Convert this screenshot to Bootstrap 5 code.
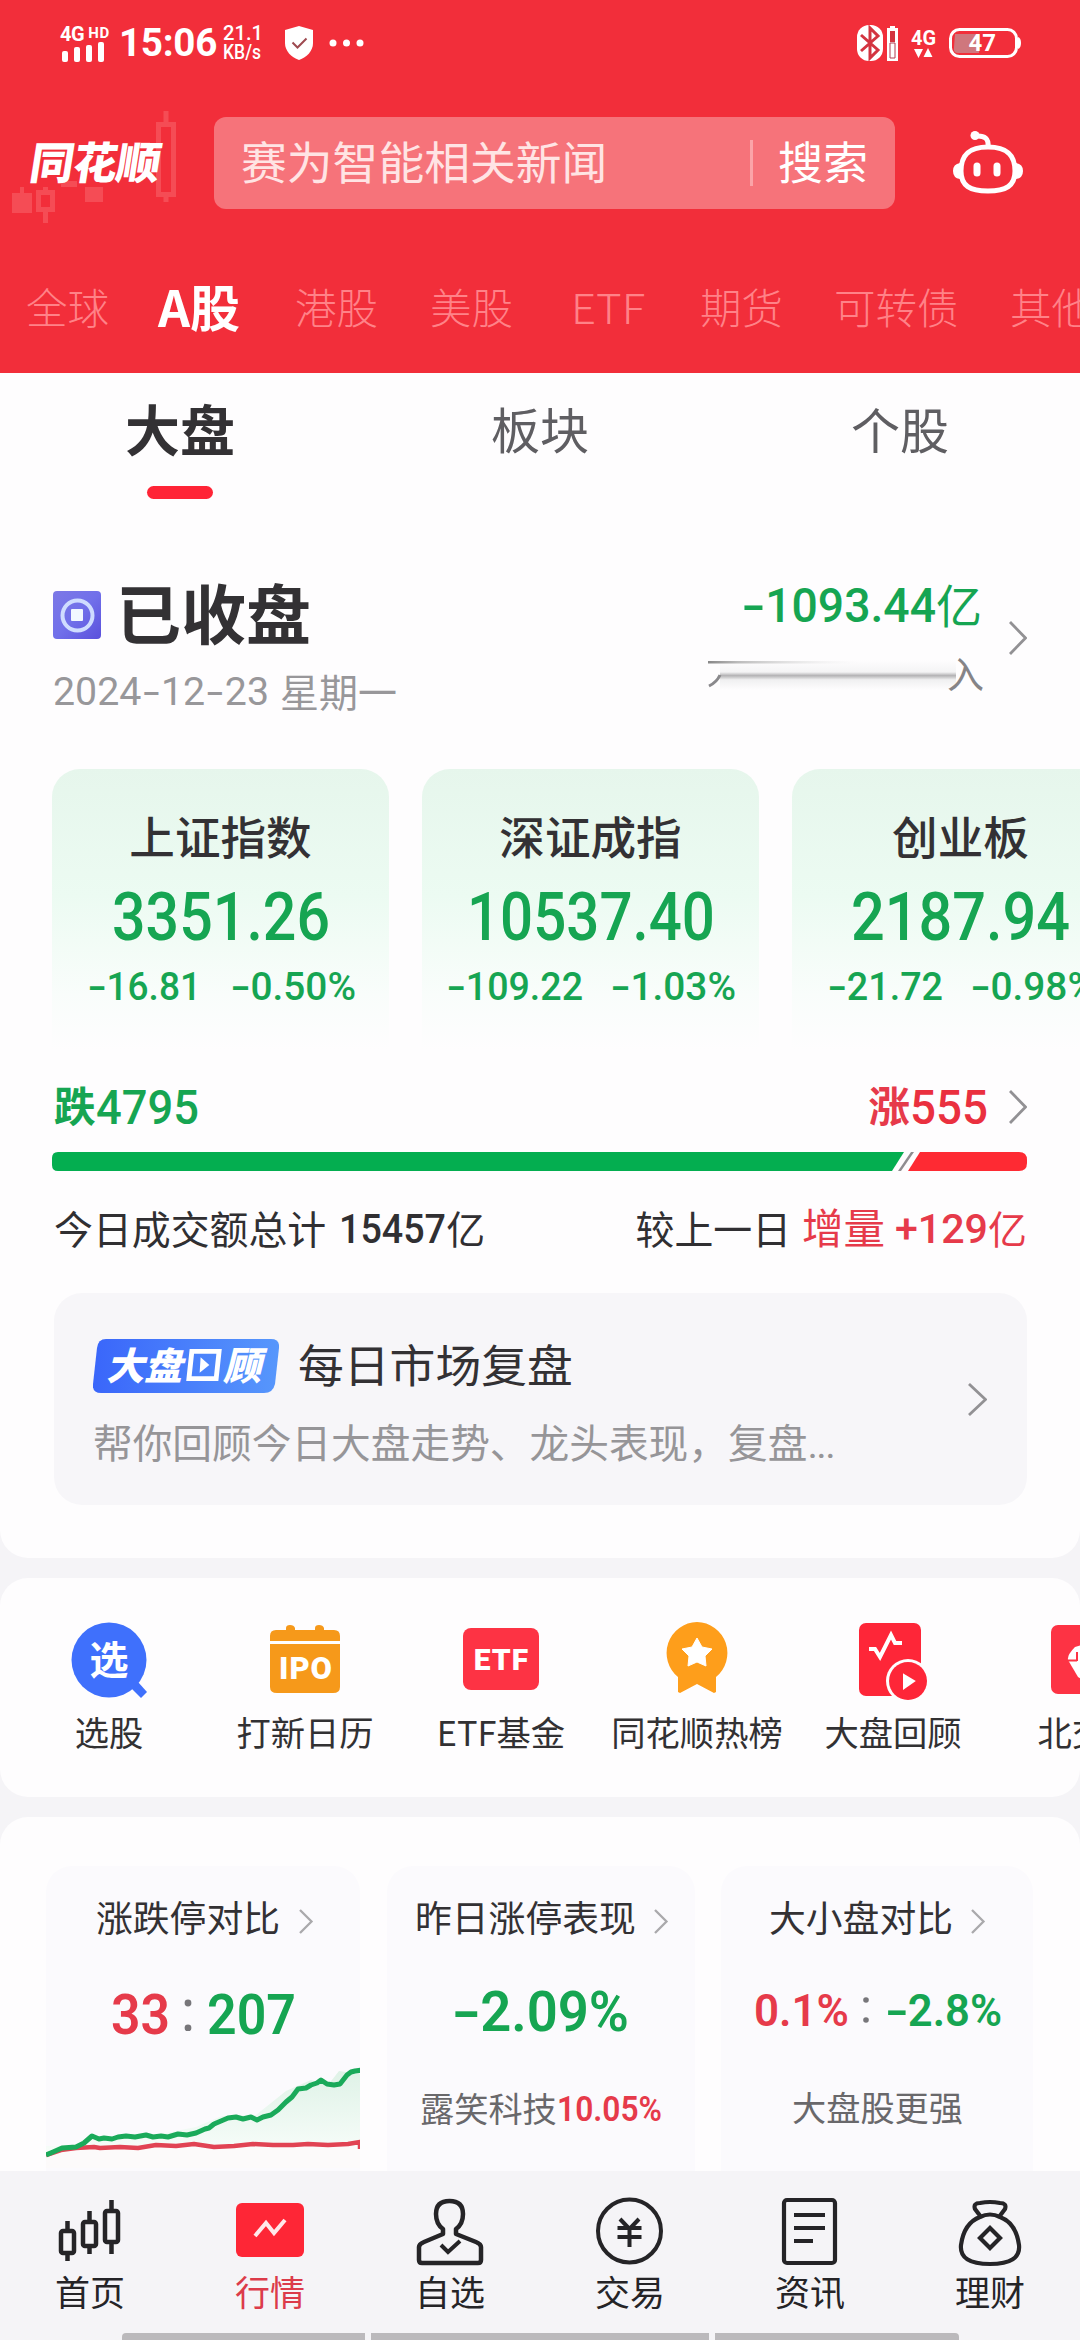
<!DOCTYPE html>
<html lang="zh-CN">
<head>
<meta charset="utf-8">
<meta name="viewport" content="width=device-width, initial-scale=1">
<title>同花顺 行情</title>
<link rel="stylesheet" href="https://cdn.jsdelivr.net/npm/bootstrap@5.3.0/dist/css/bootstrap.min.css">
<style>
:root{--up:#e63a4a;--dn:#16a552;--ink:#333134;--brand:#f22e3a}
html,body{width:1080px;height:2340px;overflow:hidden}
body{font-family:"Noto Sans CJK SC","Noto Sans",sans-serif;background:#f5f4f7;color:var(--ink);line-height:1;display:flex;flex-direction:column}
svg{display:block;flex:none}
.num{font-family:Roboto,"Noto Sans",sans-serif;font-weight:500;display:inline-block;white-space:nowrap;transform-origin:0 50%}
.neg{display:inline-block;width:.5em;transform:scaleX(1.5);text-align:center}
.up{color:var(--up)}.down{color:var(--dn)}
.line{white-space:nowrap;display:flex;align-items:center}
.cj{position:relative;top:-.05em}
.head{background:var(--brand);height:373px;color:#fff;flex:none}
.status{height:86px;padding:0 60px;font-family:Roboto,sans-serif;font-weight:700}
.clock{font-size:38.5px;letter-spacing:-.3px}
.tiny{font-size:20.5px;line-height:19px}
.searchrow{height:92px;margin-top:31px}
.brandbox{width:214px;height:130px;margin-top:-2px}
.brandname{left:31px;top:41px;font-size:44px;font-weight:900;letter-spacing:-.8px;transform:skewX(-9deg);}
.searchbox{width:681px;height:92px;border-radius:12px;background:#f6737a;font-size:45.8px;color:#ffe4e4;padding-left:27px}
.searchbtn{color:#fff}
.vline{width:3px;height:46px;background:#fba4a8}
.markets{height:164px;padding:32px 0 0 26px;font-size:41.5px;color:#ff8288;font-weight:300}
.markets>span{flex:none}
.markets .cur{font-size:50px;font-weight:700;color:#fff}
.sheet{background:#fefdfe;flex:none}
.tabs3{height:139px}
.tabs3>div{width:360px;font-size:49px;color:#5f5e62;height:109px;display:flex;align-items:center;justify-content:center}
.tabs3 .cur{font-size:55px;font-weight:700;color:var(--ink)}
.barline{width:66px;height:13px;border-radius:7px;background:#ff2436;left:147px;top:113px}
.idx{width:337px;height:281px;border-radius:28px 28px 0 0;background:linear-gradient(#e6f6ec,#ecfbf2 45%,#f9fdfb 80%,#fefdfe);flex:none}
.idxname{font-size:45.6px;font-weight:500;height:54px;margin-top:42px}
.review{margin:0 53px 0 54px;width:973px;height:212px;border-radius:28px;background:#f7f6f9}
.tag{width:186px;height:54px;position:relative;color:#fff;font-size:38px;font-weight:900;font-style:italic}
.tool{width:196px;flex:none;font-size:34.3px;height:219px;color:#323133}
.toolicon{height:76px;margin-top:44px}
.mini{height:305px;border-radius:26px 26px 0 0;background:#fbfafd;font-size:36.8px;overflow:hidden}
.sub2{font-size:34.2px;color:#69686b}
.bottom{height:169px;background:#f5f4f7;font-size:35px;color:#252427;flex:none;position:relative}
.bottom .it{width:180px;padding-top:26px}
.pill{height:7px;background:#bbb9bc;bottom:0}
</style>
<script src="https://cdn.jsdelivr.net/npm/bootstrap@5.3.0/dist/js/bootstrap.bundle.min.js"></script>
</head>
<body>
<header class="head">
  <div class="status d-flex align-items-center">
    <div style="width:60px">
      <div style="font-size:20px;line-height:16px;letter-spacing:-.5px">4G<span style="font-size:15px;vertical-align:3px;letter-spacing:.5px"> HD</span></div>
      <svg width="46" height="20" viewBox="0 0 46 20" fill="#fff"><rect x="2" y="9" width="6" height="11" rx="2"/><rect x="14" y="5" width="6" height="15" rx="2"/><rect x="26" y="3" width="6" height="17" rx="2"/><rect x="38" y="0" width="6" height="20" rx="2"/></svg>
    </div>
    <span class="num clock" style="font-weight:700" data-w="98">15:06</span>
    <div class="tiny" style="margin-left:6px;width:57px"><span class="num" data-w="40">21.1</span><br><span class="num" data-w="38">KB/s</span></div>
    <svg style="margin-left:4px" width="30" height="34" viewBox="0 0 30 34"><path d="M15 0 29 4V17C29 25 23 31 15 34 7 31 1 25 1 17V4Z" fill="#fff"/><path d="m8.500 16.500 5 5 9-9" fill="none" stroke="#9e4a50" stroke-width="2"/></svg>
    <svg style="margin-left:15px" width="36" height="8" viewBox="0 0 36 8" fill="#fff"><circle cx="4" cy="4" r="3.500"/><circle cx="17.500" cy="4" r="3.500"/><circle cx="31" cy="4" r="3.500"/></svg>
    <svg style="margin-left:491px" width="43" height="36" viewBox="0 0 43 36"><rect x="1" y="0" width="26" height="36" rx="12" fill="#fff"/><path d="m5 10 17 15-8 8V3l8 8L5 26" fill="none" stroke="#d33440" stroke-width="3"/><path d="M34 1h5v3h-5zM31 3h11v33H31z" fill="#fff"/><path d="M34 6h5v11h-5z" fill="#d33440"/><path d="M34 18h5v15h-5z" fill="none" stroke="#b33a50" stroke-width="1"/></svg>
    <div style="margin-left:12px;width:25px"><span class="num" style="font-size:20px;font-weight:700;line-height:19px" data-w="25">4G</span>
      <svg style="margin-left:3px" width="19" height="10" viewBox="0 0 19 10" fill="#fff"><path d="M0 1h9L4.500 10zM9.500 9h9L14 0z"/></svg></div>
    <div class="position-relative d-flex align-items-center justify-content-center" style="margin-left:13px;width:72px;height:30px;font-size:24px">
      <svg class="position-absolute start-0 top-0" width="72" height="30" viewBox="0 0 72 30"><path d="M6 6h24v19H9q-5 0-4-6z" fill="#cf777d"/><rect x="1.500" y="1.500" width="66" height="27" rx="9" fill="none" stroke="#fff" stroke-width="3"/><path d="M69 9q3 1 3 6t-3 6z" fill="#fff"/></svg>
      <span class="position-relative" style="left:-2px">47</span>
    </div>
  </div>
  <div class="searchrow d-flex align-items-center">
    <div class="brandbox position-relative">
      <svg width="190" height="130" viewBox="0 0 190 130" fill="none" stroke="#f54c55" stroke-width="5"><path d="M12 96h20v20H12zM20 90h4v6h-4zM85 90h18v15H85zM61 84h16v6H61zM134 45h16v6h-16z" fill="#f54c55" stroke="none"/><path d="M38.500 95.500h14v17h-14zM45.500 90v5M45.500 113v13M158.500 27.500h15v70h-15zM166 14v13M166 98v7"/></svg>
      <span class="brandname position-absolute">同花顺</span>
    </div>
    <div class="searchbox line"><span class="cj" style="width:509px">赛为智能相关新闻</span><i class="vline"></i><span class="searchbtn cj" style="margin-left:25px;font-size:45px">搜索</span></div>
    <svg style="margin-left:57px" width="72" height="66" viewBox="0 0 72 66" fill="none" stroke="#fff" stroke-width="5"><path d="M36 17C57 17 63 27 63 41 63 56 54 61 36 61S9 56 9 41C9 27 15 17 36 17Z"/><path d="M36 17C37 8 32 6 26 6"/><path d="M8 33Q1 34 1 41T8 49ZM64 33Q71 34 71 41T64 49Z" fill="#fff" stroke="none"/><circle cx="23" cy="5.500" r="4.500" fill="#fff" stroke="none"/><path d="M25 36v7M45 36v7" stroke-width="7" stroke-linecap="round"/></svg>
  </div>
  <nav class="markets d-flex align-items-center text-nowrap overflow-hidden">
    <span style="width:132px">全球</span><span class="cur cj" style="width:137px">A股</span><span style="width:135px">港股</span><span style="width:141px">美股</span><span style="width:129px"><span class="num" style="font-weight:300;font-family:'Noto Sans CJK SC',sans-serif" data-w="74">ETF</span></span><span style="width:134px">期货</span><span style="width:176px">可转债</span><span>其他</span>
  </nav>
</header>

<main class="sheet" style="height:1185px;border-radius:0 0 28px 28px">
  <div class="tabs3 d-flex position-relative"><div class="cur">大盘</div><div>板块</div><div>个股</div><span class="barline position-absolute"></span></div>

  <section class="d-flex justify-content-between" style="height:257px;padding:60px 53px 0 53px">
    <div>
      <div class="line" style="height:86px">
        <svg width="48" height="48" viewBox="0 0 48 48"><defs><linearGradient id="g1" x1="0" y1="0" x2="1" y2="1"><stop offset="0" stop-color="#7c78e6"/><stop offset=".5" stop-color="#7170ea"/><stop offset="1" stop-color="#5a50dc"/></linearGradient></defs><rect width="48" height="48" rx="4" fill="url(#g1)"/><circle cx="24.500" cy="24.500" r="15" fill="none" stroke="#cfdcff" stroke-width="4"/><rect x="18" y="18" width="12" height="12" rx="1" fill="#f1f8ff"/></svg>
        <span class="cj fw-bold" style="font-size:65px;margin-left:15px">已收盘</span>
      </div>
      <div class="line" style="height:68px;font-size:39px;color:#98979a"><span class="num" style="font-weight:400;margin-left:0" data-w="216">2024-12-23</span><span style="margin-left:11px" class="cj">星期一</span></div>
    </div>
    <div class="d-flex align-items-center" style="height:128px;margin-top:2px">
      <div style="width:276px">
        <div class="line justify-content-end down" style="height:62px"><span class="num" style="font-size:49px" data-w="194">-1093.44</span><span class="cj" style="font-size:46px">亿</span></div>
        <div class="position-relative d-flex justify-content-end" style="height:66px;font-size:37px;color:#858487">
          <svg class="position-absolute" style="left:2px;top:12px" width="252" height="44" viewBox="0 0 252 44"><defs><linearGradient id="g2"><stop offset="0" stop-color="#888"/><stop offset=".2" stop-color="#bbb"/><stop offset="1" stop-color="#eee" stop-opacity="0"/></linearGradient><linearGradient id="g3" x1="0" y1="0" x2="0" y2="1"><stop offset="0" stop-color="#fefdfe"/><stop offset=".4" stop-color="#f4f4f5"/><stop offset=".52" stop-color="#b4b3b5"/><stop offset=".66" stop-color="#f0f0f1"/><stop offset="1" stop-color="#fefdfe"/></linearGradient></defs><path d="M12 12H248V42H12Z" fill="url(#g3)"/><path d="M0 13h150v2.500H0z" fill="url(#g2)"/><path d="M1 38Q9 34 12 27" fill="none" stroke="#8a898c" stroke-width="3"/></svg>
          <span class="position-relative" style="top:19px;left:2px">入</span>
        </div>
      </div>
      <svg style="margin-left:27px" width="18" height="34" viewBox="0 0 18 34" fill="none" stroke="#929194" stroke-width="2.800"><path d="m1 1 15.500 16L1 33"/></svg>
    </div>
  </section>

  <section class="d-flex overflow-hidden" style="padding-left:52px;gap:33px">
    <div class="idx">
      <div class="idxname line justify-content-center"><span class="cj">上证指数</span></div>
      <div class="line justify-content-center down" style="height:104px;font-size:67px"><span class="num" data-w="218">3351.26</span></div>
      <div class="line down" style="height:36px;font-size:39px;padding-left:36px"><span class="num" data-w="113">-16.81</span><span class="num" style="margin-left:30px" data-w="125">-0.50%</span></div>
    </div>
    <div class="idx">
      <div class="idxname line justify-content-center"><span class="cj">深证成指</span></div>
      <div class="line justify-content-center down" style="height:104px;font-size:67px"><span class="num" data-w="248">10537.40</span></div>
      <div class="line down" style="height:36px;font-size:39px;padding-left:25px"><span class="num" data-w="136">-109.22</span><span class="num" style="margin-left:28px" data-w="125">-1.03%</span></div>
    </div>
    <div class="idx">
      <div class="idxname line justify-content-center"><span class="cj">创业板</span></div>
      <div class="line justify-content-center down" style="height:104px;font-size:67px"><span class="num" data-w="219">2187.94</span></div>
      <div class="line down" style="height:36px;font-size:39px;padding-left:36px"><span class="num" data-w="115">-21.72</span><span class="num" style="margin-left:28px" data-w="125">-0.98%</span></div>
    </div>
  </section>

  <section style="padding:25px 53px 0 52px">
    <div class="line justify-content-between" style="height:64px;font-size:41.500px">
      <span class="line down"><span class="cj" style="font-weight:700;margin-left:2px">跌</span><span class="num" style="font-size:49px;font-weight:500" data-w="103">4795</span></span>
      <span class="line up"><span class="cj" style="font-weight:700">涨</span><span class="num" style="font-size:49px;font-weight:500;color:#ea303f" data-w="78">555</span><svg style="margin-left:21px" width="18" height="34" viewBox="0 0 18 34" fill="none" stroke="#929194" stroke-width="2.800"><path d="m1 1 15.500 16L1 33"/></svg></span>
    </div>
    <svg style="margin-top:13px" width="975" height="19" viewBox="0 0 975 19"><path d="M6 0H852L840 19H6Q0 19 0 13V6Q0 0 6 0Z" fill="#04ae50"/><path d="M846 19h3L862 0h-3z" fill="#8f8d90"/><path d="M868 0H967Q975 0 975 8V11Q975 19 967 19H856Z" fill="#fe2a33"/></svg>
    <div class="line justify-content-between" style="height:116px;font-size:38.900px;color:#302f32">
      <span class="line"><span class="cj" style="margin-left:2px">今日成交额总计</span><span class="num" style="font-size:41px;margin-left:13px" data-w="107">15457</span><span class="cj">亿</span></span>
      <span class="line"><span class="cj">较上一日</span><span class="cj up" style="font-size:41.500px;margin-left:11px">增量</span><span class="num up" style="font-size:41px;margin-left:10px" data-w="93">+129</span><span class="cj up">亿</span></span>
    </div>
  </section>

  <section class="review d-flex align-items-center position-relative" style="margin-top:6px">
    <div style="padding-left:39px;padding-top:26px;width:914px">
      <div class="line" style="height:54px">
        <div class="tag line">
          <svg class="position-absolute start-0 top-0" width="186" height="54" viewBox="0 0 186 54"><defs><linearGradient id="g4"><stop offset="0" stop-color="#3a66fa"/><stop offset="1" stop-color="#5797fc"/></linearGradient></defs><path d="M13 0H178Q187 0 186 9L182 45Q180 54 171 54H8Q-1 54 0 45L4 9Q5 0 13 0Z" fill="url(#g4)"/></svg>
          <span class="position-relative cj" style="left:13px">大盘<svg class="d-inline-block" style="margin:0 1px 0 4px;vertical-align:-2px" width="36" height="33" viewBox="0 0 37 33"><path d="M6 2H34L31 30H3Z" fill="none" stroke="#fff" stroke-width="5"/><path d="m15 8 9 8-10 8z" fill="#fff"/></svg>顾</span>
        </div>
        <span class="cj" style="font-size:45.800px;margin-left:19px">每日市场复盘</span>
      </div>
      <div class="line" style="height:80px;margin-top:12px;font-size:39.700px;color:#969598"><span class="cj">帮你回顾今日大盘走势、龙头表现，复盘<span style="font-family:Roboto,sans-serif;letter-spacing:-1.5px">...</span></span></div>
    </div>
    <svg width="19" height="33" viewBox="0 0 19 33" fill="none" stroke="#929194" stroke-width="2.800"><path d="m1 1 16.500 15.500L1 32"/></svg>
  </section>
</main>

<section class="sheet d-flex overflow-hidden" style="height:219px;margin-top:20px;border-radius:28px;padding-left:11px">
  <div class="tool text-center"><div class="toolicon d-flex justify-content-center"><svg width="76" height="76" viewBox="0 0 76 76"><path d="m60 66 7-6 9 10-6 6z" fill="#3f70fc"/><circle cx="38" cy="38" r="37.500" fill="#3f70fc"/><text x="38" y="52" text-anchor="middle" font-size="39" font-weight="700" fill="#fff">选</text></svg></div><div style="margin-top:16px">选股</div></div>
  <div class="tool text-center"><div class="toolicon d-flex justify-content-center"><svg width="72" height="76" viewBox="0 0 72 76"><path d="M7 8H17V6Q17 3 21 3T26 6V8H46V6Q46 3 50 3T55 6V8H65Q71 8 71 14V19H1V14Q1 8 7 8ZM1 22H71V65Q71 71 64 71H8Q1 71 1 65Z" fill="#f6991a"/><text x="37" y="57" text-anchor="middle" font-family="Roboto" font-size="31" font-weight="900" letter-spacing="1" fill="#fff">IPO</text></svg></div><div style="margin-top:16px">打新日历</div></div>
  <div class="tool text-center"><div class="toolicon d-flex justify-content-center"><svg width="76" height="76" viewBox="0 0 76 76"><rect x="0" y="6" width="76" height="62" rx="8" fill="#fd3344"/><text x="38.500" y="48" text-anchor="middle" font-family="Roboto" font-size="30" font-weight="900" letter-spacing="1" fill="#fff">ETF</text></svg></div><div style="margin-top:16px">ETF基金</div></div>
  <div class="tool text-center"><div class="toolicon d-flex justify-content-center"><svg width="64" height="76" viewBox="0 0 64 76"><path d="M32 0A31 31 0 0 1 51 55V70L49 71 32 62 15 71 13 70V55A31 31 0 0 1 32 0Z" fill="#fe9e1b"/><path d="m32 16 5 9 10 2-7 7 1 10-9-4-9 4 1-10-7-7 10-2z" fill="#fff" stroke="#fff"/></svg></div><div style="margin-top:16px">同花顺热榜</div></div>
  <div class="tool text-center"><div class="toolicon d-flex justify-content-center"><svg width="70" height="78" viewBox="0 0 70 78"><rect x="1" y="1" width="62" height="73" rx="7" fill="#fe2638"/><path d="M11 27h6l5 8 11-22 4 8h7" fill="none" stroke="#fff" stroke-width="4"/><circle cx="50" cy="59" r="22" fill="#fefdfe"/><circle cx="50" cy="59" r="19" fill="#fe2638"/><path d="m46 53 10 6-10 7z" fill="#fff" stroke="#fff" stroke-width="2"/></svg></div><div style="margin-top:16px">大盘回顾</div></div>
  <div class="tool text-center"><div class="toolicon d-flex justify-content-center"><svg width="76" height="76" viewBox="0 0 76 76"><rect x="0" y="3" width="76" height="69" rx="7" fill="#fd3344"/><path d="M38 21 24 25Q16 33 17 38L27 55 38 62Z" fill="#fff"/><path d="M17 38.500h9M26 39V30" stroke="#fd3344" stroke-width="2"/></svg></div><div style="margin-top:16px">北交所</div></div>
</section>

<section class="sheet d-flex" style="height:354px;margin-top:20px;border-radius:28px 28px 0 0;padding:49px 0 0 46px">
  <div class="mini" style="width:314px">
    <div class="line" style="height:104px;padding-left:50px"><span class="cj">涨跌停对比</span><svg style="margin-left:19px;margin-top:6px" width="15" height="25" viewBox="0 0 15 25" fill="none" stroke="#aaa9ac" stroke-width="2.300"><path d="m1 1 11.500 11.500L1 24"/></svg></div>
    <div class="line" style="height:90px;font-size:56px;padding-left:65px"><span class="num up" style="font-weight:600" data-w="59">33</span><svg style="margin:0 8px 0 14px" width="10" height="32" viewBox="0 0 10 32" fill="#77767a"><circle cx="4" cy="4" r="3.400"/><circle cx="4" cy="29" r="3.400"/></svg><span class="num down" data-w="89" style="margin-left:5px;font-weight:600">207</span></div>
    <svg width="314" height="111" viewBox="0 0 314 111"><defs><linearGradient id="g5" x1="0" y1="0" x2="0" y2="1"><stop offset="0" stop-color="#dff2e7"/><stop offset="1" stop-color="#f8fdfa"/></linearGradient></defs><path d="M0 95 30 87 46 77 110 75 150 67 176 56 210 55 240 31 265 20 282 25 293 11 314 14V86H0Z" fill="url(#g5)"/><path d="M0 95V108H314V86H30Z" fill="#fcfafa"/><path d="m0 95 15-5 15-2 18-1 6 1 20-1 18 1 18-3 20 1 18-2 20 3 20-1 19-2 20 1 20 0 15-1 20 1 20-1 12-2v7" fill="none" stroke="#e14353" stroke-width="4.500" stroke-linejoin="round"/><path d="m0 95 7-3 9-4 14-1 8-4 8-7 7 3 5-1 8 1 6-2 8-1 9 1 11-2 7 2 8-1 7 1 10-3 9 1 9-2 9-4 4-1 5-4 7-3 7-3 8-1 7 2 8-2 6 3 6-3 8-2 7-5 8-8 6-5 6-8 8-1 5-3 6-2 4-3 6 4 7 1 6-1 7-9 4-3 4-1 8-1 5-1 3 7" fill="none" stroke="#1aaa5a" stroke-width="5" stroke-linejoin="round"/></svg>
  </div>
  <div class="mini" style="width:308px;margin-left:27px">
    <div class="line" style="height:104px;padding-left:28px"><span class="cj">昨日涨停表现</span><svg style="margin-left:18px;margin-top:6px" width="15" height="25" viewBox="0 0 15 25" fill="none" stroke="#aaa9ac" stroke-width="2.300"><path d="m1 1 11.500 11.500L1 24"/></svg></div>
    <div class="line down" style="height:84px;font-size:56px;padding-left:66px"><span class="num" style="font-weight:600" data-w="176">-2.09%</span></div>
    <div class="line sub2" style="height:110px;padding-left:33px"><span class="cj">露笑科技</span><span class="num up" style="font-weight:600" data-w="105">10.05%</span></div>
  </div>
  <div class="mini" style="width:312px;margin-left:26px">
    <div class="line" style="height:104px;padding-left:48px"><span class="cj">大小盘对比</span><svg style="margin-left:18px;margin-top:6px" width="15" height="25" viewBox="0 0 15 25" fill="none" stroke="#aaa9ac" stroke-width="2.300"><path d="m1 1 11.500 11.500L1 24"/></svg></div>
    <div class="line" style="height:80px;font-size:45px;padding-left:33px"><span class="num up" style="font-weight:600" data-w="95">0.1%</span><svg style="margin:0 16px 0 13px" width="8" height="26" viewBox="0 0 8 26" fill="#77767a"><circle cx="4" cy="3" r="2.800"/><circle cx="4" cy="23" r="2.800"/></svg><span class="num down" style="font-weight:600" data-w="116">-2.8%</span></div>
    <div class="line sub2" style="height:116px;padding-left:71px"><span class="cj">大盘股更强</span></div>
  </div>
</section>

<nav class="bottom d-flex text-center">
  <div class="it"><svg class="mx-auto" width="76" height="76" viewBox="0 0 76 76" fill="none" stroke="#252427" stroke-width="4.500"><rect x="9" y="34" width="13" height="22" rx="2"/><rect x="31" y="25" width="13" height="24" rx="2"/><rect x="53" y="14" width="13" height="31" rx="2"/><path d="M15.500 24v10M15.500 56v8M37.500 14v10M37.500 49v8M59.500 3v11M59.500 45v12"/></svg><div class="navtxt">首页</div></div>
  <div class="it" style="color:#dc3b4a"><svg class="mx-auto" width="76" height="76" viewBox="0 0 76 76"><rect x="4" y="6" width="68" height="54" rx="6" fill="#fe2636"/><path d="m23 39 11-13 8 10 11-13" fill="none" stroke="#ffe8ea" stroke-width="4"/></svg><div class="navtxt">行情</div></div>
  <div class="it"><svg class="mx-auto" width="76" height="76" viewBox="0 0 76 76" fill="none" stroke="#252427" stroke-width="4.500" stroke-linejoin="round"><path d="M31 37V32Q24 27 24 17 24 4 37.500 4T51 17Q51 27 44 32V37L64 45Q69 47 69 50V63Q69 66 66 66H10Q7 66 7 63V50Q7 47 12 45Z"/><path d="m29 48 7 7 12-11" stroke-width="4" stroke-linejoin="miter"/></svg><div class="navtxt">自选</div></div>
  <div class="it"><svg class="mx-auto" width="76" height="76" viewBox="0 0 76 76" fill="none" stroke="#252427" stroke-width="4"><circle cx="37.500" cy="34" r="31.500"/><path d="m28 22 9.500 10L47 22M25.500 31h24M25.500 40h24M37.500 31v19"/></svg><div class="navtxt">交易</div></div>
  <div class="it"><svg class="mx-auto" width="76" height="76" viewBox="0 0 76 76" fill="none" stroke="#252427" stroke-width="4.200"><rect x="12" y="3" width="51" height="63" rx="3"/><path d="M22 18h31M22 31h31M22 44h19"/></svg><div class="navtxt">资讯</div></div>
  <div class="it"><svg class="mx-auto" width="76" height="76" viewBox="0 0 76 76" fill="none" stroke="#252427" stroke-width="4.200" stroke-linejoin="round"><path d="M29 20 23 12Q21 6 28 6 38 4 48 6 55 6 53 12L47 20M28 20Q38 15 48 20 64 26 67 48 69 67 38 67T9 48Q12 26 28 20Z"/><path d="m38 31 10 10-10 10-10-10z" stroke-linejoin="miter"/></svg><div class="navtxt">理财</div></div>
  <span class="pill position-absolute" style="left:122px;width:243px;border-radius:4px 0 0 0"></span><span class="pill position-absolute" style="left:371px;width:338px"></span><span class="pill position-absolute" style="left:715px;width:244px;border-radius:0 4px 0 0"></span>
</nav>
<script>
// Condense each figure to its data-w width and widen its minus sign.
document.querySelectorAll('.num').forEach(function (el) {
  el.innerHTML = el.textContent.replace(/-/g, '<span class="neg">-</span>');
  var natural = el.getBoundingClientRect().width, w = +el.dataset.w;
  el.style.transform = 'scaleX(' + w / natural + ')';
  el.style.marginRight = (w - natural) + 'px';
});
</script>
</body>
</html>
